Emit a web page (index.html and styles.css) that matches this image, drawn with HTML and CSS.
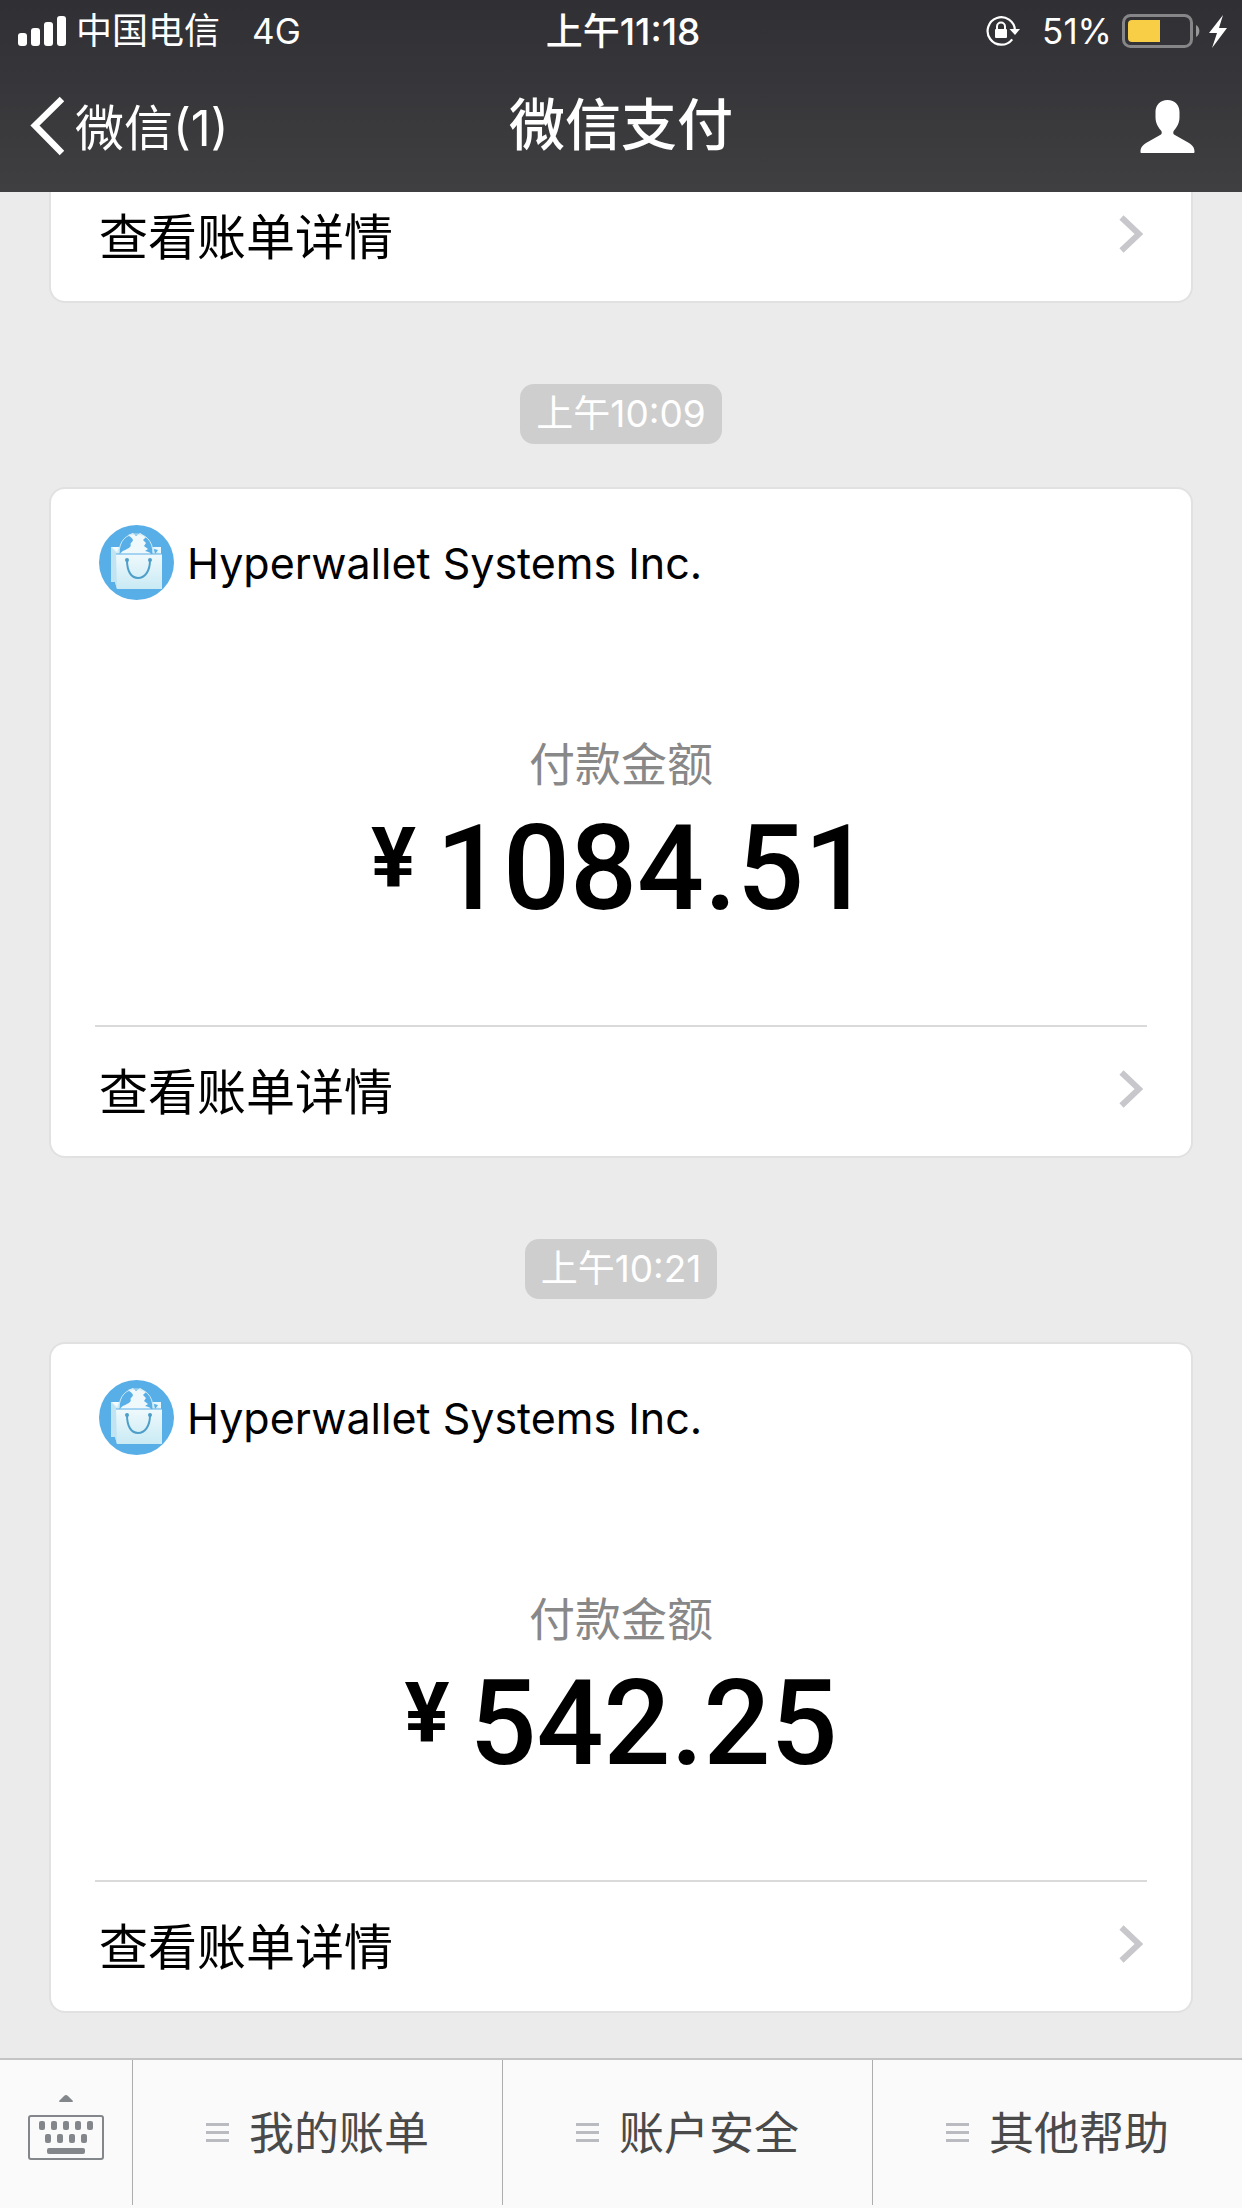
FILE: index.html
```html
<!DOCTYPE html>
<html lang="zh-CN">
<head>
<meta charset="utf-8">
<meta name="viewport" content="width=device-width, initial-scale=1">
<title>微信支付</title>
<link rel="stylesheet" href="styles.css">
</head>
<body>
<svg width="0" height="0" class="defs" aria-hidden="true">
  <defs>
    <linearGradient id="bag-front" x1="0" y1="0" x2="0" y2="1">
      <stop offset="0" stop-color="#eff9fc"/>
      <stop offset="1" stop-color="#c9eaf4"/>
    </linearGradient>
    <symbol id="shop" viewBox="0 0 75 75">
      <circle cx="37.500" cy="37.500" r="37.500" fill="#58aee6"/>
      <path d="M12 22h50v42H18l-2-7h-4z" fill="#d3edf6"/>
      <path d="M12 22l6 7v35l-2-7h-4z" fill="#c0e4f1"/>
      <path d="M54 22h8v8z" fill="#e8f7fb"/>
      <path d="M55 24l4 1-3 4z" fill="#58aee6"/>
      <path d="M13 22h7l-2 5z" fill="#f4fbfd"/>
      <path d="M20 29c0-14 8-20 17-20s17 6 17 20z" fill="#58aee6"/>
      <path d="M21 29c2-4 7-4 10-7 2-2-1-3 2-5 3-3-2-5-4-7l5-2 3 3 4-3 6 4-3 3 3 3-2 3 4 3-3 2c3 1 5 1 6 3z" fill="#eff9fc"/>
      <path d="M20 29c0-14 8-20 17-20s17 6 17 20" fill="none" stroke="#cfeaf3" stroke-width="1"/>
      <path d="M17 29h46v35H18z" fill="url(#bag-front)"/>
      <path d="M17 29h46" stroke="#58aee6" stroke-width="1"/>
      <path d="M28 35c0 11 4 18 11 18s12-7 12-18" fill="none" stroke="#4d9fc9" stroke-width="2"/>
      <circle cx="28" cy="35" r="2" fill="#4d9fc9"/>
      <circle cx="51" cy="35" r="2" fill="#4d9fc9"/>
    </symbol>
    <symbol id="chevron" viewBox="0 0 24 38">
      <path d="M2.500 2.500L20 19 2.500 35.500" fill="none" stroke="#c7c7cc" stroke-width="6"/>
    </symbol>
    <symbol id="menu" viewBox="0 0 23 19">
      <path d="M0 1.500h23M0 9.500h23M0 17.500h23" stroke="#b9bbc0" stroke-width="3"/>
    </symbol>
  </defs>
</svg>

<header class="top">
  <div class="status">
    <div class="status-side">
      <svg class="signal" viewBox="0 0 48 30" fill="#fff" aria-hidden="true">
        <rect x="0" y="17" width="9" height="13" rx="3"/>
        <rect x="13" y="12" width="9" height="18" rx="3"/>
        <rect x="26" y="6" width="9" height="24" rx="3"/>
        <rect x="39" y="0" width="9" height="30" rx="3"/>
      </svg>
      <span class="carrier">中国电信</span>
      <span class="latin">4G</span>
    </div>
    <span class="clock">上午11:18</span>
    <div class="status-side status-right">
      <svg class="lock" viewBox="0 0 34 32" aria-hidden="true">
        <path d="M29 15.500A13.700 13.700 0 1 0 26.200 24.300" fill="none" stroke="#fff" stroke-width="2.200"/>
        <path d="M23.500 14h10.500l-5 6z" fill="#fff"/>
        <rect x="9" y="14" width="12" height="9" rx="1" fill="#fff"/>
        <path d="M11 15v-3.500a4 4 0 0 1 8 0V15" fill="none" stroke="#fff" stroke-width="2"/>
      </svg>
      <span class="latin">51%</span>
      <svg class="battery" viewBox="0 0 106 34" aria-hidden="true">
        <rect x="1.500" y="1.500" width="68" height="31" rx="7" fill="none" stroke="#868688" stroke-width="3"/>
        <path d="M74 11a7 7 0 0 1 0 12z" fill="#98989a"/>
        <path d="M10 6h28v22H10a4 4 0 0 1-4-4V10a4 4 0 0 1 4-4z" fill="#f7ce46"/>
        <path d="M101 1L87 19h8l-5 15 15-20h-8z" fill="#fff"/>
      </svg>
    </div>
  </div>
  <nav class="nav">
    <button class="back" type="button">
      <svg class="back-icon" viewBox="0 0 34 60" aria-hidden="true"><path d="M32 3L5 29.500 32 57" fill="none" stroke="#fff" stroke-width="6.500"/></svg>
      <span class="back-text">微信(1)</span>
    </button>
    <h1 class="title">微信支付</h1>
    <button class="profile" type="button" aria-label="账户">
      <svg class="profile-icon" viewBox="0 0 55 53" aria-hidden="true"><path d="M27.500 0C35 0 39.500 5 39.500 12v5c0 6-2.500 10-5.500 13.500-1 1.500-1 3 0 4C39 37.500 44 40 49 43c4 2.500 5.500 5 5.500 9 0 .700-.500 1-1 1h-52C.700 53 .500 52.500.500 52c0-4 1.500-6.500 5.500-9 5-3 10-5.500 15-8.500 1-1 1-2.500 0-4C18 27 15.500 23 15.500 17v-5C15.500 5 20 0 27.500 0z" fill="#fff"/></svg>
    </button>
  </nav>
</header>

<main class="feed">
  <article class="card card-cut">
    <a class="details" href="#"><span>查看账单详情</span><svg class="chevron" aria-hidden="true"><use href="#chevron"/></svg></a>
  </article>

  <time class="stamp">上午10:09</time>
  <article class="card">
    <div class="merchant"><svg class="shop" aria-hidden="true"><use href="#shop"/></svg><span>Hyperwallet Systems Inc.</span></div>
    <div class="payment">
      <p class="label">付款金额</p>
      <p class="amount"><span class="yen">¥</span><span>1084.51</span></p>
    </div>
    <a class="details" href="#"><span>查看账单详情</span><svg class="chevron" aria-hidden="true"><use href="#chevron"/></svg></a>
  </article>

  <time class="stamp">上午10:21</time>
  <article class="card">
    <div class="merchant"><svg class="shop" aria-hidden="true"><use href="#shop"/></svg><span>Hyperwallet Systems Inc.</span></div>
    <div class="payment">
      <p class="label">付款金额</p>
      <p class="amount"><span class="yen">¥</span><span>542.25</span></p>
    </div>
    <a class="details" href="#"><span>查看账单详情</span><svg class="chevron" aria-hidden="true"><use href="#chevron"/></svg></a>
  </article>
</main>

<footer class="menu-bar">
  <button class="keyboard" type="button" aria-label="键盘">
    <svg class="keyboard-icon" viewBox="0 0 76 66" aria-hidden="true" fill="#83868b">
      <path d="M31 6l5-5q2-2 4 0l5 5q0 1-1 1H32q-1 0-1-1z"/>
      <rect x="1" y="21" width="74" height="43" rx="2" fill="none" stroke="#83868b" stroke-width="2"/>
      <rect x="11" y="26" width="6" height="9" rx="2"/><rect x="23" y="26" width="6" height="9" rx="2"/><rect x="35" y="26" width="6" height="9" rx="2"/><rect x="47" y="26" width="6" height="9" rx="2"/><rect x="59" y="26" width="6" height="9" rx="2"/>
      <rect x="17" y="39" width="6" height="9" rx="2"/><rect x="29" y="39" width="6" height="9" rx="2"/><rect x="41" y="39" width="6" height="9" rx="2"/><rect x="53" y="39" width="6" height="9" rx="2"/>
      <rect x="19" y="53" width="38" height="6" rx="2"/>
    </svg>
  </button>
  <button class="menu-item" type="button"><svg class="menu-icon" aria-hidden="true"><use href="#menu"/></svg><span class="menu-text">我的账单</span></button>
  <button class="menu-item" type="button"><svg class="menu-icon" aria-hidden="true"><use href="#menu"/></svg><span class="menu-text">账户安全</span></button>
  <button class="menu-item" type="button"><svg class="menu-icon" aria-hidden="true"><use href="#menu"/></svg><span class="menu-text">其他帮助</span></button>
</footer>
</body>
</html>
```
FILE: styles.css
```css
* {
  box-sizing: border-box;
}

body {
  margin: 0;
  min-height: 100vh;
  display: flex;
  flex-direction: column;
  background: #ebebeb;
  color: #000;
  font-family: Inter, "Noto Sans CJK SC", sans-serif;
}

h1,
p {
  margin: 0;
}

svg {
  display: block;
  flex: none;
}

button {
  border: 0;
  margin: 0;
  padding: 0;
  background: none;
  color: inherit;
  font: inherit;
}

.defs {
  position: absolute;
}

/* status bar and title bar */
.top {
  position: relative;
  background: linear-gradient(#302f34, #3f3f41);
  color: #fff;
  height: 192px;
}

.status {
  display: grid;
  grid-template-columns: 1fr auto 1fr;
  align-items: center;
  height: 60px;
  padding: 0 14px 0 18px;
  font-size: 36px;
  line-height: 60px;
}

.status-side {
  display: flex;
  align-items: center;
}

.status-right {
  justify-content: flex-end;
}

.signal {
  width: 48px;
  height: 30px;
}

.carrier {
  margin: 0 32px 0 10px;
}

.latin {
  font-size: 35px;
}

.clock {
  padding-top: 2px;
  font-size: 37px;
  font-weight: 500;
}

.lock {
  width: 34px;
  height: 32px;
  margin-right: 22px;
}

.battery {
  width: 106px;
  height: 34px;
  margin-left: 10px;
}

.nav {
  display: grid;
  grid-template-columns: 1fr auto 1fr;
  align-items: center;
  height: 132px;
  padding: 0 30px;
}

.back {
  display: flex;
  align-items: center;
  gap: 11px;
  justify-self: start;
  font-size: 49px;
}

.back-text {
  padding-bottom: 4px;
}

.back-icon {
  width: 34px;
  height: 60px;
}

.title {
  padding-bottom: 12px;
  font-size: 56px;
  font-weight: 500;
}

.profile {
  justify-self: end;
  margin-right: 17px;
}

.profile-icon {
  width: 55px;
  height: 53px;
}

/* message feed */
.feed {
  flex: 1;
  display: flex;
  flex-direction: column;
  align-items: center;
  padding: 0 51px 47px;
}

.card {
  width: 100%;
  padding: 0 44px;
  border-radius: 14px;
  background: #fff;
  box-shadow: 0 0 0 2px #e1e1e1;
}

.card-cut {
  border-radius: 0 0 14px 14px;
}

.stamp {
  display: block;
  margin: 83px 0 45px;
  padding: 0 16px;
  border-radius: 14px;
  background: #cecece;
  color: #fff;
  font-size: 37px;
  line-height: 60px;
}

.merchant {
  display: flex;
  align-items: center;
  gap: 13px;
  padding: 36px 4px 0;
  font-size: 43px;
}

.shop {
  width: 75px;
  height: 75px;
}

.payment {
  height: 425px;
  padding-top: 129px;
  text-align: center;
}

.label {
  color: #888;
  font-size: 46px;
  line-height: 70px;
}

.amount {
  display: flex;
  justify-content: center;
  align-items: flex-start;
  gap: 20px;
  font-family: Roboto, "Noto Sans CJK SC", sans-serif;
  font-size: 118px;
  font-weight: 500;
  line-height: 140px;
}

.yen {
  font-size: 84px;
  font-weight: 700;
  line-height: 120px;
}

.details {
  display: flex;
  align-items: center;
  justify-content: space-between;
  height: 131px;
  padding: 0 4px 6px;
  border-top: 2px solid #dadada;
  color: #000;
  font-size: 49px;
  text-decoration: none;
}

.card-cut .details {
  height: 109px;
  padding-bottom: 26px;
  border-top: 0;
}

.chevron {
  width: 24px;
  height: 38px;
}

/* bottom menu */
.menu-bar {
  display: grid;
  grid-template-columns: 132px 1fr 1fr 1fr;
  height: 150px;
  padding-bottom: 3px;
  border-top: 2px solid #c4c4c4;
  background: #fafafa;
  color: #4a4a4a;
  font-size: 45px;
}

.keyboard {
  display: flex;
  align-items: center;
  justify-content: center;
  padding-bottom: 10px;
}

.keyboard-icon {
  width: 76px;
  height: 66px;
}

.menu-item {
  display: flex;
  align-items: center;
  justify-content: center;
  gap: 20px;
  border-left: 1px solid #adadad;
}

.menu-text {
  padding-bottom: 5px;
}

.menu-icon {
  width: 23px;
  height: 19px;
}
```
